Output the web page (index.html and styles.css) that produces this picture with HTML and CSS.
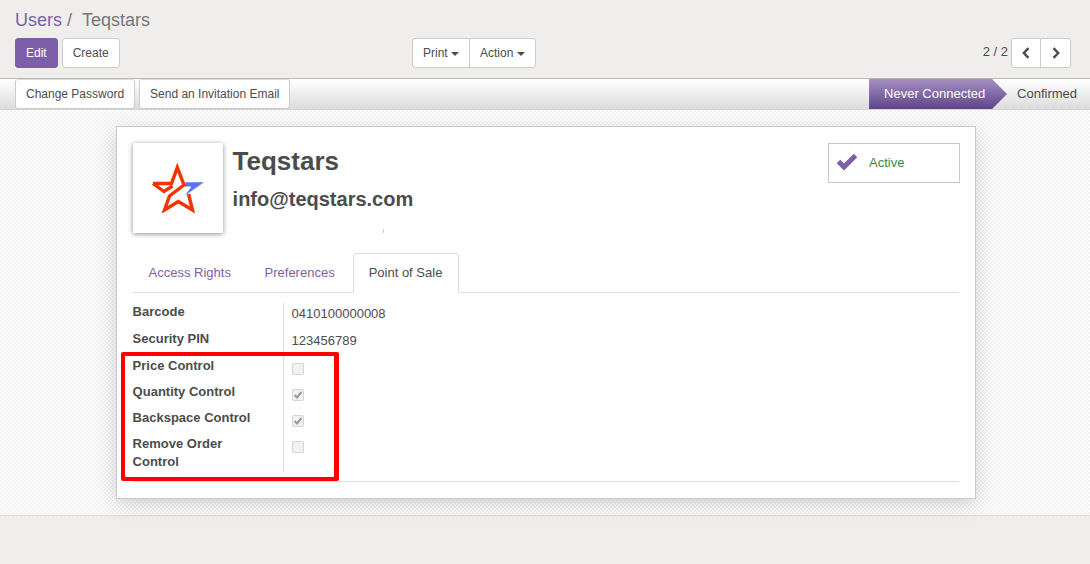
FILE: index.html
```html
<!DOCTYPE html>
<html lang="en">
<head>
<meta charset="utf-8">
<title>Teqstars</title>
<link rel="stylesheet" href="styles.css">
</head>
<body>
<header class="panel">
  <div class="crumbs"><a class="crumb-link">Users</a><span class="crumb-sep">/</span><span class="crumb-cur">Teqstars</span></div>
  <div class="panel-row">
    <div class="left-btns">
      <button class="btn primary">Edit</button>
      <button class="btn">Create</button>
    </div>
    <div class="group mid-btns">
      <button class="btn">Print <i class="caret"></i></button>
      <button class="btn">Action <i class="caret"></i></button>
    </div>
    <div class="pager">
      <span class="pager-text">2 / 2</span>
      <div class="group">
        <button class="btn nav"><svg width="10" height="12" viewBox="0 0 10 12"><path d="M7.500 1.200 2.800 6l4.700 4.800" fill="none" stroke="#4c4c4c" stroke-width="2.400"/></svg></button>
        <button class="btn nav"><svg width="10" height="12" viewBox="0 0 10 12"><path d="M2.500 1.200 7.200 6l-4.700 4.800" fill="none" stroke="#4c4c4c" stroke-width="2.400"/></svg></button>
      </div>
    </div>
  </div>
</header>
<div class="statusbar">
  <div class="status-btns">
    <button class="btn">Change Password</button>
    <button class="btn">Send an Invitation Email</button>
  </div>
  <div class="status-steps">
    <span class="step active">Never Connected</span>
    <span class="step">Confirmed</span>
  </div>
</div>
<main class="sheet-bg">
  <section class="sheet">
    <div class="head">
      <div class="avatar">
        <svg width="52" height="50" viewBox="0 0 52 50">
          <path d="M33.500 19.300H52L33 32.500 39.500 23.500H33Z" fill="#5b74f5"/>
          <path d="M1 20.500H19.500L25.300 4.500 32 22 17.500 33 12.500 47 26.300 38.500 40.500 47 36.500 31" fill="none" stroke="#f73100" stroke-width="3.400"/>
          <path d="M1 20.500 12 28.500 20.500 23" fill="none" stroke="#f73100" stroke-width="3.400"/>
        </svg>
      </div>
      <div class="titles">
        <h1 class="name">Teqstars</h1>
        <h2 class="mail">info@teqstars.com</h2>
        <div class="tick"></div>
      </div>
      <div class="active-box">
        <svg width="22" height="18" viewBox="0 0 22 18"><path d="M2.500 8.500 8 14 19.500 2.500" fill="none" stroke="#7c5fa8" stroke-width="5"/></svg>
        <span class="active-text">Active</span>
      </div>
    </div>
    <nav class="tabs">
      <a class="tab">Access Rights</a>
      <a class="tab">Preferences</a>
      <a class="tab current">Point of Sale</a>
    </nav>
    <div class="fields">
      <div class="label l-first">Barcode</div><div class="value v-first">0410100000008</div>
      <div class="label">Security PIN</div><div class="value">123456789</div>
      <div class="label l-check">Price Control</div><div class="value v-check"><span class="check"></span></div>
      <div class="label l-check">Quantity Control</div><div class="value v-check"><span class="check on"><svg width="10" height="10" viewBox="0 0 10 10"><path d="M1.500 5 4 7.500 8.500 2" fill="none" stroke="#999" stroke-width="2"/></svg></span></div>
      <div class="label l-check">Backspace Control</div><div class="value v-check"><span class="check on"><svg width="10" height="10" viewBox="0 0 10 10"><path d="M1.500 5 4 7.500 8.500 2" fill="none" stroke="#999" stroke-width="2"/></svg></span></div>
      <div class="label l-check l-last">Remove Order Control</div><div class="value v-check v-last"><span class="check"></span></div>
    </div>
    <div class="rule"></div>
    <div class="highlight"></div>
  </section>
</main>
</body>
</html>
```

FILE: styles.css
```css
* { box-sizing: border-box; }
html, body { margin: 0; height: 100%; }
body {
  width: 1090px;
  height: 564px;
  overflow: hidden;
  background: #efeeec;
  font-family: "Liberation Sans", Arial, sans-serif;
  font-size: 13px;
  color: #4c4c4c;
}
.panel { height: 78px; padding: 9px 19px 0 15px; }
.crumbs { height: 29px; font-size: 18px; line-height: 22px; }
.crumb-link { color: #7c5fa8; }
.crumb-sep { color: #777; margin: 0 10px 0 5px; }
.crumb-cur { color: #777; }
.panel-row { display: grid; grid-template-columns: 397px auto 1fr; align-items: start; }
.left-btns { display: flex; gap: 4px; }
.btn {
  height: 30px;
  padding: 0 10px;
  border: 1px solid #ccc;
  border-radius: 3px;
  background: #fff;
  color: #4c4c4c;
  font: 12px/1.5 "Liberation Sans", Arial, sans-serif;
  white-space: nowrap;
}
.btn.primary { background: #7c5fa8; border-color: #7c5fa8; color: #fff; }
.group { display: flex; }
.group .btn:first-child { border-radius: 3px 0 0 3px; }
.group .btn:last-child { border-radius: 0 3px 3px 0; margin-left: -1px; }
.caret {
  display: inline-block;
  width: 0;
  height: 0;
  margin-left: 0;
  vertical-align: 1px;
  border-top: 4px solid #4c4c4c;
  border-left: 4px solid transparent;
  border-right: 4px solid transparent;
}
.pager { display: flex; justify-content: flex-end; gap: 3px; }
.pager-text { line-height: 27px; }
.btn.nav { width: 30px; padding: 0; display: flex; align-items: center; justify-content: center; }
.btn.nav:last-child { width: 31px; }
.statusbar {
  height: 32px;
  display: flex;
  justify-content: space-between;
  padding-left: 15px;
  border-top: 1px solid #b8b8b8;
  border-bottom: 1px solid #d2d2d2;
  background: linear-gradient(#fff, #dcdcdc);
}
.status-btns { display: flex; gap: 4px; }
.status-btns .btn { height: 30px; font-size: 12px; padding: 0 10px; border-top-color: #ddd; }
.status-steps { display: flex; font-size: 13px; }
.step { line-height: 30px; padding: 0 13px 0 25px; color: #4c4c4c; }
.step.active {
  width: 138px;
  padding: 0 0 0 15px;
  color: #fff;
  background: linear-gradient(#a48fc2, #5f4488);
  clip-path: polygon(0 0, 123px 0, 138px 50%, 123px 100%, 0 100%);
}
.step.active + .step { padding-left: 10px; }
.sheet-bg {
  height: 406px;
  padding-top: 16px;
  border-bottom: 1px solid #dcdcdc;
  background-color: #fbfbfb;
  background-image: conic-gradient(#f2f2f2 25%, #fff 0 50%, #f2f2f2 0 75%, #fff 0);
  background-size: 4px 4px;
}
.sheet {
  position: relative;
  width: 860px;
  height: 373px;
  margin-left: 116px;
  padding: 16px 16px 0 15.6px;
  background: #fff;
  border: 1px solid #c8c8d4;
  box-shadow: 0 5px 20px -1px rgba(0, 0, 0, .2);
}
.head { display: flex; height: 110px; }
.avatar {
  width: 90px;
  height: 90px;
  margin-left: .4px;
  display: flex;
  align-items: center;
  justify-content: center;
  background: #fff;
  box-shadow: 0 1px 5px rgba(0, 0, 0, .45);
}
.titles { margin-left: 9.600px; flex: 1; }
.name { margin: 3px 0 0; font-size: 26px; line-height: 30px; font-weight: bold; color: #4c4c4c; }
.mail { margin: 11px 0 0; font-size: 20px; line-height: 24px; font-weight: bold; color: #4c4c4c; }
.tick { width: 1px; height: 4px; margin: 18px 0 0 150px; background: #ccc; }
.active-box {
  width: 132px;
  height: 40px;
  margin-right: -1px;
  display: flex;
  align-items: center;
  gap: 11px;
  padding: 0 0 2px 7px;
  border: 1px solid #c8c8c8;
  background: #fff;
}
.active-text { color: #3a8a4a; font-size: 13px; }
.tabs { display: flex; height: 40px; border-bottom: 1px solid #ddd; margin-left: .4px; }
.tab { padding: 12px 16px 0 15.600px; line-height: 15px; color: #7c5fa8; margin-right: 2px; }
.tab.current {
  height: 40px;
  margin-right: 0;
  color: #4c4c4c;
  background: #fff;
  border: 1px solid #ddd;
  border-bottom-color: #fff;
  border-radius: 3px 3px 0 0;
  padding: 11px 16px 0 15px;
}
.fields { display: grid; grid-template-columns: 150.400px 1fr; margin-top: 10px; }
.label { font-weight: bold; line-height: 18px; padding-right: 30px; }
.l-first { height: 27px; }
.label:nth-child(3) { height: 27px; }
.l-check { height: 26px; }
.l-last { height: 37px; }
.value { border-left: 1px solid #ddd; padding-left: 7.600px; line-height: 20px; font-size: 13px; padding-top: 1px; }
.v-check { padding-top: 6px; padding-left: 8px; }
.check {
  display: block;
  width: 12px;
  height: 12px;
  border: 1px solid #d4d4d4;
  border-radius: 2px;
  background: #f1f1f1;
}
.check.on svg { display: block; margin: 0; }
.rule { height: 1px; margin: 9px 0 0 .4px; background: #ddd; }
.highlight {
  position: absolute;
  left: 4px;
  top: 225px;
  width: 218px;
  height: 129px;
  border: 4px solid #f00;
  border-right-width: 5px;
  border-radius: 2px;
}
```
